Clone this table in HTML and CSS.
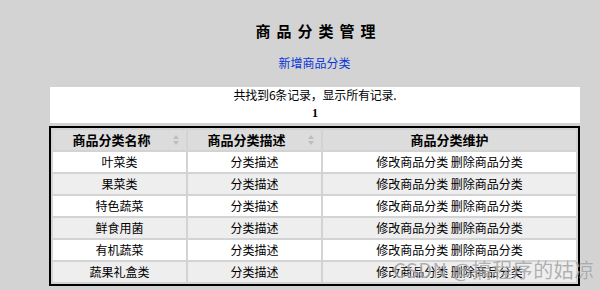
FILE: index.html
```html
<!DOCTYPE html>
<html lang="zh">
<head>
<meta charset="utf-8">
<title>商品分类管理</title>
<link rel="stylesheet" href="styles.css">
</head>
<body>
<div class="page">
  <h1 class="title">商品分类管理</h1>
  <div class="add"><a href="#" class="add-link">新增商品分类</a></div>
  <div class="summary">
    <div class="summary-text">共找到6条记录，显示所有记录.</div>
    <div class="pager">1</div>
  </div>
  <table class="grid">
    <thead>
      <tr>
        <th class="sortable"><span>商品分类名称</span><i class="sort"></i></th>
        <th class="sortable"><span>商品分类描述</span><i class="sort"></i></th>
        <th class="wide">商品分类维护</th>
      </tr>
    </thead>
    <tbody>
      <tr><td>叶菜类</td><td>分类描述</td><td>修改商品分类 删除商品分类</td></tr>
      <tr><td>果菜类</td><td>分类描述</td><td>修改商品分类 删除商品分类</td></tr>
      <tr><td>特色蔬菜</td><td>分类描述</td><td>修改商品分类 删除商品分类</td></tr>
      <tr><td>鲜食用菌</td><td>分类描述</td><td>修改商品分类 删除商品分类</td></tr>
      <tr><td>有机蔬菜</td><td>分类描述</td><td>修改商品分类 删除商品分类</td></tr>
      <tr><td>蔬果礼盒类</td><td>分类描述</td><td>修改商品分类 删除商品分类</td></tr>
    </tbody>
  </table>
</div>
<div class="watermark">CSDN @搞程序的姑凉</div>
</body>
</html>
```
FILE: styles.css
```css
html, body {
  margin: 0;
  padding: 0;
}
body {
  background: #d3d3d3;
  font-family: "Noto Sans CJK SC", "Noto Sans", sans-serif;
  color: #000;
  height: 290px;
  overflow: hidden;
  position: relative;
}
.page {
  width: 531px;
  margin-left: 49px;
  padding-top: 20px;
}
.title {
  margin: 0;
  text-align: center;
  font-size: 15px;
  font-weight: bold;
  letter-spacing: 6px;
  line-height: 22px;
  padding-left: 8px;
}
.add {
  text-align: center;
  font-size: 12px;
  line-height: 18px;
  margin-top: 12px;
}
.add-link {
  color: #0a37d8;
  text-decoration: none;
}
.summary {
  margin-top: 15px;
  background: #fff;
  margin-left: 1px;
  height: 36px;
  text-align: center;
}
.summary-text {
  font-size: 12px;
  line-height: 16px;
  letter-spacing: -0.2px;
}
.pager {
  font-family: "Liberation Serif", serif;
  font-weight: bold;
  font-size: 12px;
  line-height: 20px;
}
.grid {
  margin-top: 3px;
  width: 531px;
  border: 2px solid #000;
  border-spacing: 2px;
  font-size: 12px;
  table-layout: fixed;
}
.grid th {
  background: #dcdcdc;
  height: 20px;
  padding: 0;
  font-size: 13px;
  font-weight: bold;
  line-height: 20px;
  text-align: center;
  position: relative;
}
.grid th.sortable {
  width: 133px;
}
.grid th.sortable span {
  position: relative;
  left: -8px;
}
.sort {
  position: absolute;
  right: 6px;
  top: 5px;
  width: 7px;
  height: 10px;
}
.sort::before, .sort::after {
  content: "";
  position: absolute;
  left: 0;
  border-left: 3.5px solid transparent;
  border-right: 3.5px solid transparent;
}
.sort::before {
  top: 0;
  border-bottom: 4px solid #bdbdbd;
}
.sort::after {
  bottom: 0;
  border-top: 4px solid #bdbdbd;
}
.grid td {
  height: 20px;
  padding: 0;
  line-height: 20px;
  text-align: center;
}
.grid tbody tr:nth-child(even) td {
  background: #eeeeee;
}
.grid tbody tr:nth-child(odd) td {
  background: #fff;
}
.watermark {
  position: absolute;
  left: 393px;
  top: 257px;
  font-size: 20px;
  line-height: 26px;
  letter-spacing: 0.5px;
  color: rgba(110, 110, 110, 0.55);
  text-shadow: 0 0 1px rgba(255,255,255,0.8);
  white-space: nowrap;
  pointer-events: none;
}
```
